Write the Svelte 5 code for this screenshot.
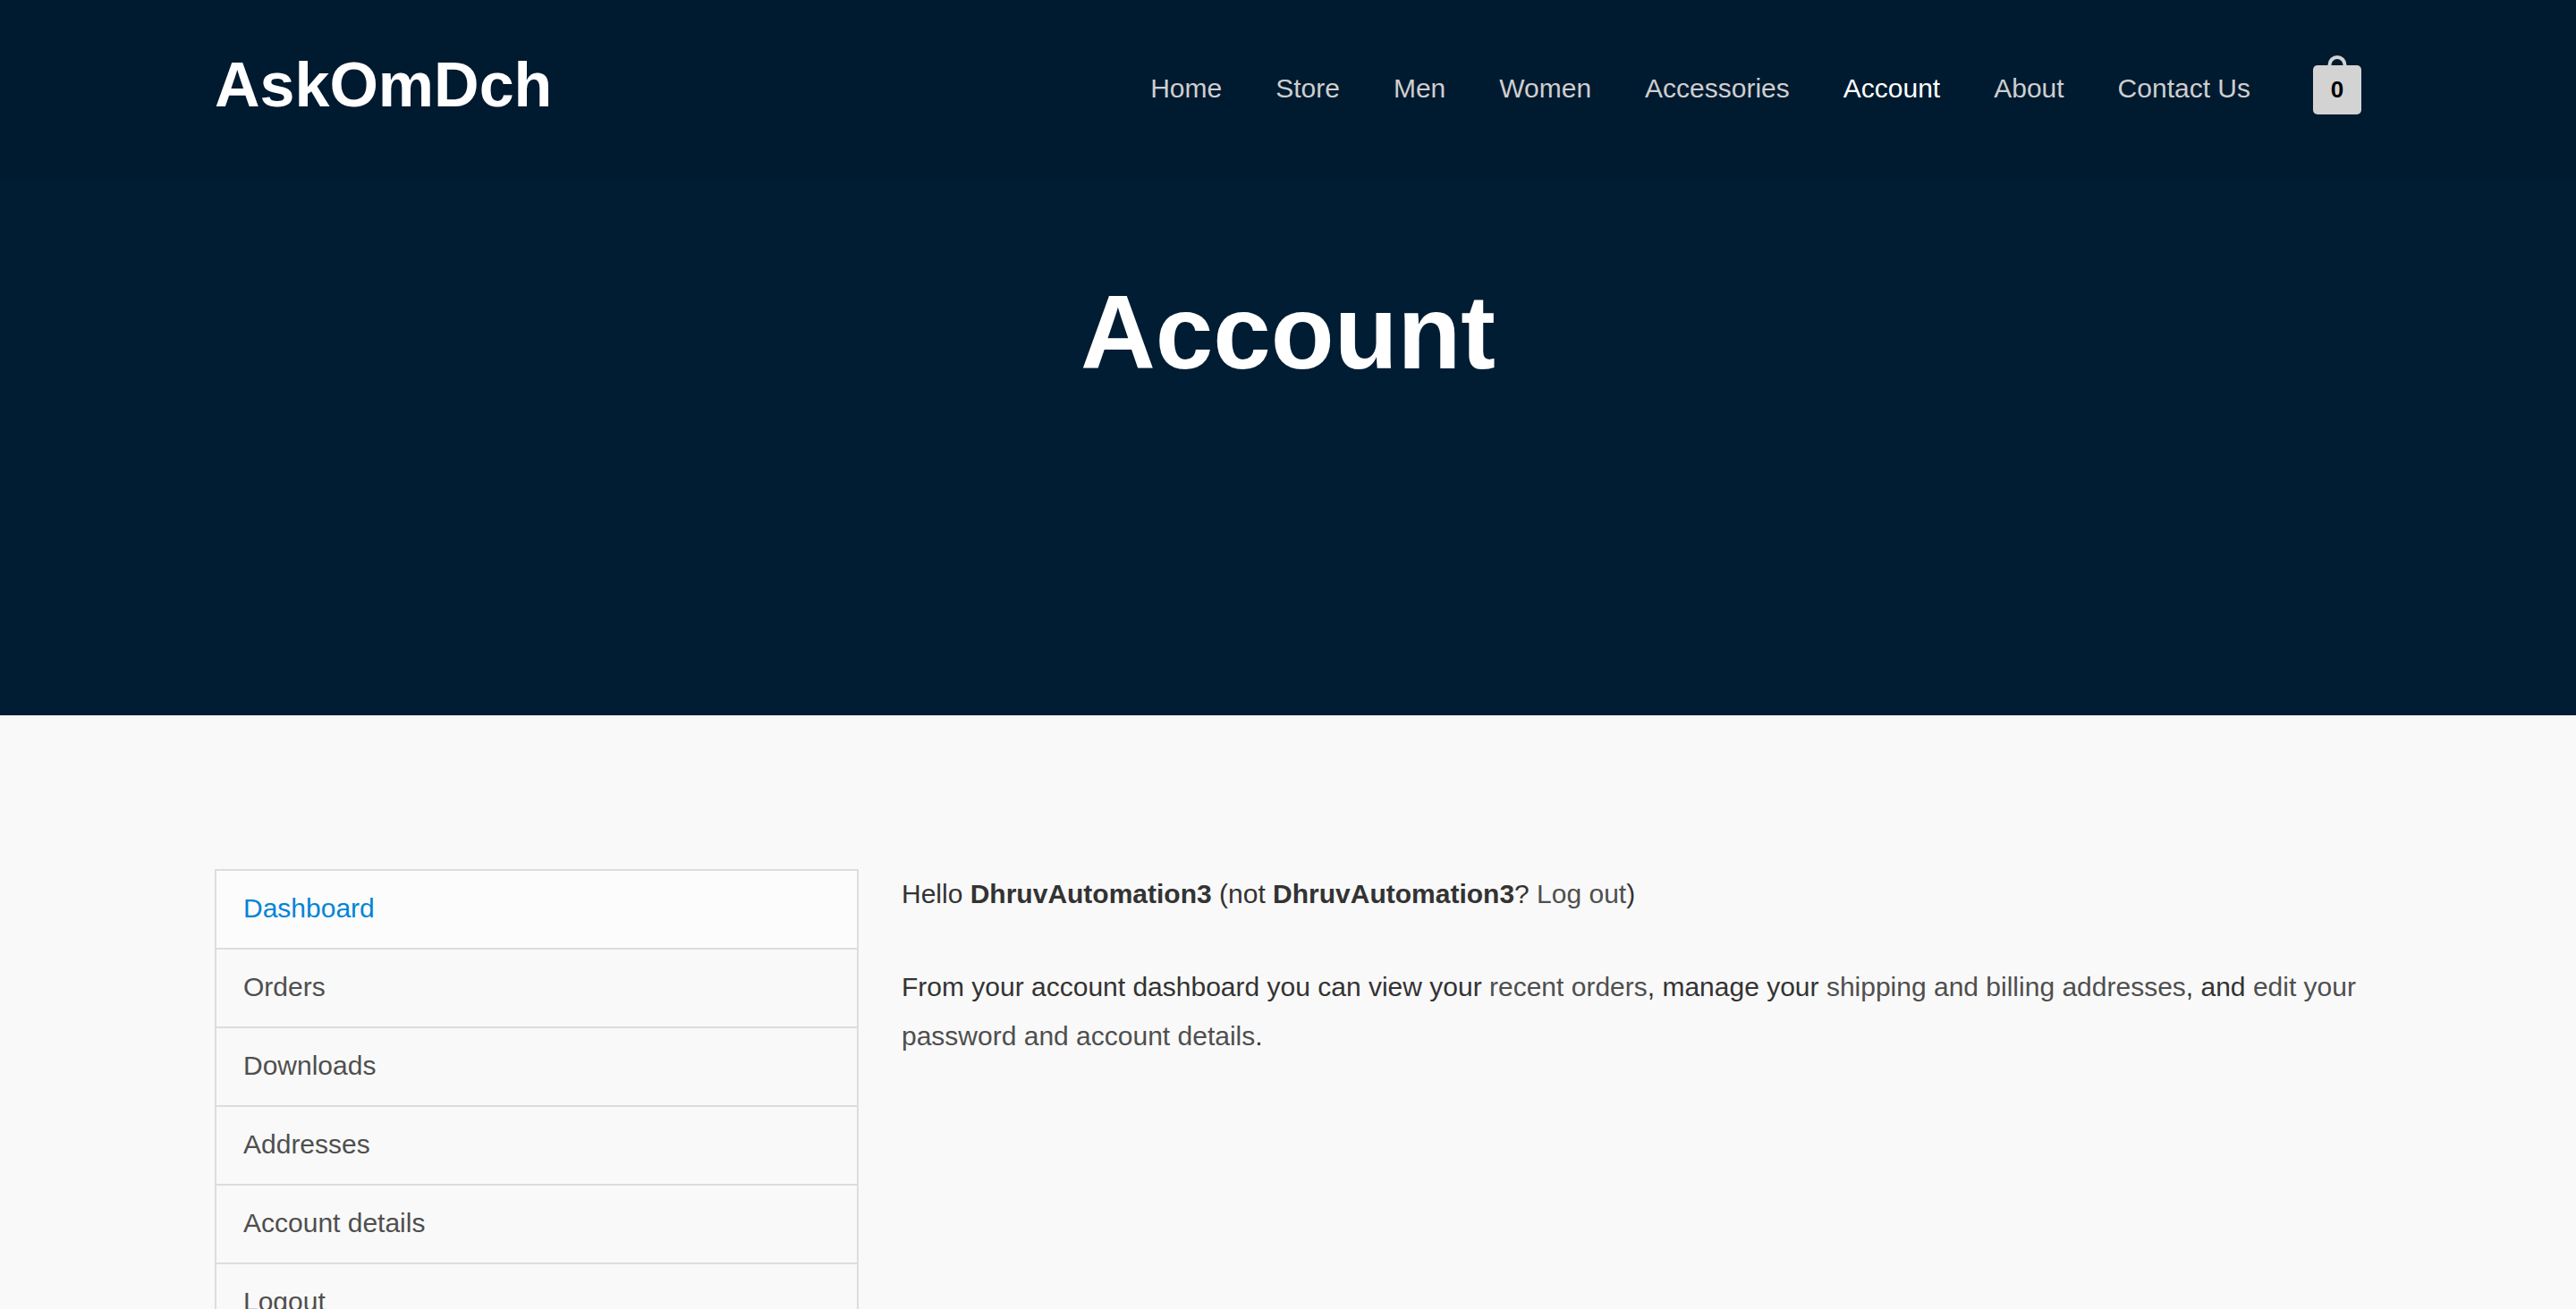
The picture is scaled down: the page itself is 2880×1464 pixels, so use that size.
<script>
  const links = ['Home', 'Store', 'Men', 'Women', 'Accessories', 'Account', 'About', 'Contact Us'];
  const sections = ['Dashboard', 'Orders', 'Downloads', 'Addresses', 'Account details', 'Logout'];
</script>

<header class="site-header">
  <div class="container bar">
    <a class="brand" href="#home">AskOmDch</a>
    <nav class="menu" aria-label="Main">
      {#each links as link}
        <a href="#{link}" class:current={link === 'Account'}>{link}</a>
      {/each}
      <a class="cart" href="#cart" aria-label="View cart, 0 items">
        <svg viewBox="0 0 22 11" width="22" height="11" aria-hidden="true">
          <path d="M2.5 11V10.500a8.500 8.500 0 0 1 17 0V11" fill="none" stroke="#d3d3d3" stroke-width="4" />
        </svg>
        <span class="count">0</span>
      </a>
    </nav>
  </div>
</header>

<section class="hero">
  <h1>Account</h1>
</section>

<main class="container account">
  <nav class="sections" aria-label="Account pages">
    <ul>
      {#each sections as section, i}
        <li><a href="#{section}" class:active={i === 0}>{section}</a></li>
      {/each}
    </ul>
  </nav>
  <div class="content">
    <p>Hello <strong>DhruvAutomation3</strong> (not <strong>DhruvAutomation3</strong>? <a href="#logout">Log out</a>)</p>
    <p>From your account dashboard you can view your <a href="#orders">recent orders</a>, manage your <a href="#addresses">shipping and billing addresses</a>, and <a href="#details">edit your password and account details</a>.</p>
  </div>
</main>

<style>
  :global(html) {
    scrollbar-width: none;
  }

  :global(body) {
    margin: 0;
    background: #f9f9f9;
    color: #333;
    font-family: "Liberation Sans", Arial, sans-serif;
    font-size: 30px;
    line-height: 56px;
  }

  a {
    color: #4f4f4f;
    text-decoration: none;
  }

  .container {
    box-sizing: border-box;
    max-width: 2480px;
    margin: 0 auto;
    padding: 0 40px;
  }

  .site-header {
    background: #001a30;
  }

  .bar {
    display: flex;
    align-items: center;
    justify-content: space-between;
    min-height: 200px;
  }

  .brand {
    padding-bottom: 10px;
    color: #fff;
    font-size: 70px;
    font-weight: 700;
    line-height: 80px;
  }

  .menu {
    display: flex;
    align-items: center;
    gap: 60px;
    padding-bottom: 2px;
  }

  .menu a {
    color: #cecece;
  }

  .menu .current {
    color: #fff;
  }

  .menu .cart {
    display: flex;
    flex-direction: column;
    align-items: center;
    margin: 0 0 8px 10px;
  }

  .cart svg {
    display: block;
  }

  .count {
    width: 54px;
    border-radius: 5px;
    background: #d3d3d3;
    color: #000;
    font-size: 26px;
    font-weight: 700;
    line-height: 55px;
    text-align: center;
  }

  .hero {
    padding: 105px 40px 361px;
    background: #001d34;
  }

  h1 {
    margin: 0;
    color: #fff;
    font-size: 116px;
    font-weight: 700;
    line-height: 134px;
    text-align: center;
  }

  .account {
    display: grid;
    grid-template-columns: 30% 68%;
    justify-content: space-between;
    align-items: start;
    padding-top: 172px;
  }

  ul {
    margin: 0;
    padding: 0;
    border: 2px solid #ddd;
    border-bottom: 0;
    list-style: none;
  }

  .sections a {
    display: block;
    padding: 14px 30px 16px;
    border-bottom: 2px solid #ddd;
  }

  .sections .active {
    background: #fcfcfc;
    color: #0084d6;
  }

  p {
    margin: 0 0 49px;
    line-height: 55px;
  }

  strong {
    font-weight: 700;
  }
</style>
